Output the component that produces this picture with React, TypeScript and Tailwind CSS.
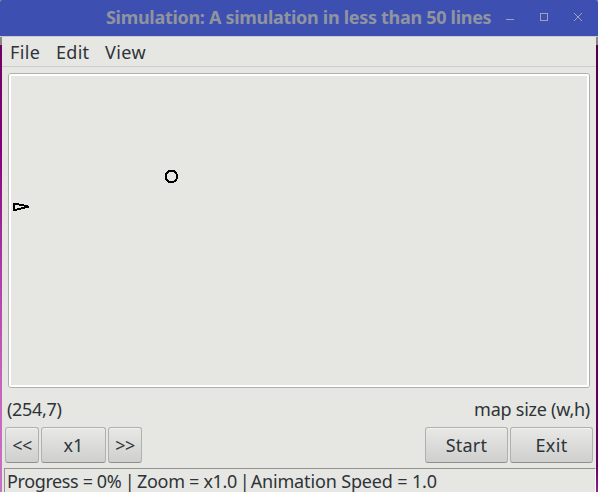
import React from "react";

const buttonClass =
  "flex h-9 items-center justify-center rounded-[3px] border border-[#b0b1ae] border-b-[#8f908d] bg-linear-to-b from-[#e8e9e6] to-[#cfd0cd] shadow-[inset_0_1px_0_#f1f2ef]";

function Label({ children, className = "" }: { children: React.ReactNode; className?: string }) {
  return <span className={`block whitespace-pre leading-6 ${className}`}>{children}</span>;
}

function TitleBar() {
  return (
    <header className="flex h-[37px] shrink-0 items-start rounded-t-[3px] border-b border-[#c9cbd3] bg-[#3d50b1] text-[#90949f]">
      <Label className="ml-[106px] mt-[5px] w-[396px] text-[18px] font-bold tracking-[-0.3px]">
        Simulation: A simulation in less than 50 lines
      </Label>
      <svg className="h-9 w-24" viewBox="502 0 96 36" fill="none" stroke="#a0a3b8" shapeRendering="crispEdges">
        <path d="M506 19.5h8" />
        <rect x="540.5" y="13.5" width="7" height="7" />
        <path d="m574 13 8 8m0-8-8 8" shapeRendering="auto" />
      </svg>
    </header>
  );
}

function SimulationCanvas() {
  return (
    <div className="mt-[6px] mr-[6px] ml-[6px] h-[315px] shrink-0 rounded-[3px] border border-[#b0b1ad] bg-[#e6e7e3]">
      <div className="h-full w-full rounded-[2px] border-2 border-white">
        <svg className="h-[309px] w-[576px]" viewBox="11 76 576 309" fill="none" stroke="#000" strokeWidth="2" shapeRendering="crispEdges">
          <circle cx="171.4" cy="176.4" r="5.8" />
          <path d="M14 203.4v6.8l15-3.6z" strokeWidth="1.9" strokeLinejoin="bevel" />
        </svg>
      </div>
    </div>
  );
}

export default function App() {
  return (
    <main className="flex h-[492px] w-[598px] flex-col overflow-hidden bg-[#8c918e] font-['Noto_Sans','Open_Sans',sans-serif] text-[18px] text-[#2e3338]">
      <TitleBar />
      <div className="flex min-h-0 flex-1">
        <div className="w-[2px] shrink-0 bg-[linear-gradient(to_bottom,#898a87_8px,#700064_8px,#820078_110px,#b03eaa_240px,#c765bd_350px,#c872c3)]" />
        <section className="flex w-[594px] shrink-0 flex-col bg-[#e6e7e3]">
          <nav className="flex h-[30px] shrink-0 border-b border-[#cecfcb] pt-[3px]">
            <Label className="ml-[8px] w-[46px] tracking-[0.4px]">File</Label>
            <Label className="w-[49px] tracking-[0.3px]">Edit</Label>
            <Label className="tracking-[0.4px]">View</Label>
          </nav>
          <SimulationCanvas />
          <div className="mt-[9px] flex h-[30px] shrink-0 justify-between pl-[5px] pr-[5px]">
            <Label className="tracking-[-0.3px]">(254,7)</Label>
            <Label className="-mr-px tracking-[-0.25px] pr-[2px]">map size (w,h)</Label>
          </div>
          <div className="flex h-[41px] shrink-0 items-start pl-[3px]">
            <button className={`${buttonClass} w-[34px] tracking-[-0.5px]`}>&lt;&lt;</button>
            <button className={`${buttonClass} ml-[2px] w-[65px]`}>x1</button>
            <button className={`${buttonClass} ml-[2px] w-[34px] tracking-[-0.5px]`}>&gt;&gt;</button>
            <button className={`${buttonClass} ml-auto w-[83px] tracking-[0.2px]`}>Start</button>
            <button className={`${buttonClass} ml-[2px] mr-[3px] w-[83px] tracking-[0.3px]`}>Exit</button>
          </div>
          <footer className="ml-[2px] h-6 shrink-0 border-l border-r border-t border-[#92938f] border-r-white pl-[2px]">
            <Label className="tracking-[-0.38px]">
              Progress = 0%<span className="tracking-[-1.2px]"> | </span>
              <span className="tracking-[-0.32px]">Zoom = x1.0</span>
              <span className="tracking-[-1.9px]"> | </span>
              <span className="tracking-[-0.15px]">Animation Speed = 1.0</span>
            </Label>
          </footer>
        </section>
        <div className="w-[2px] shrink-0 bg-[linear-gradient(to_bottom,#858480_8px,#500044_8px,#650060_430px,#902487)]" />
      </div>
    </main>
  );
}
